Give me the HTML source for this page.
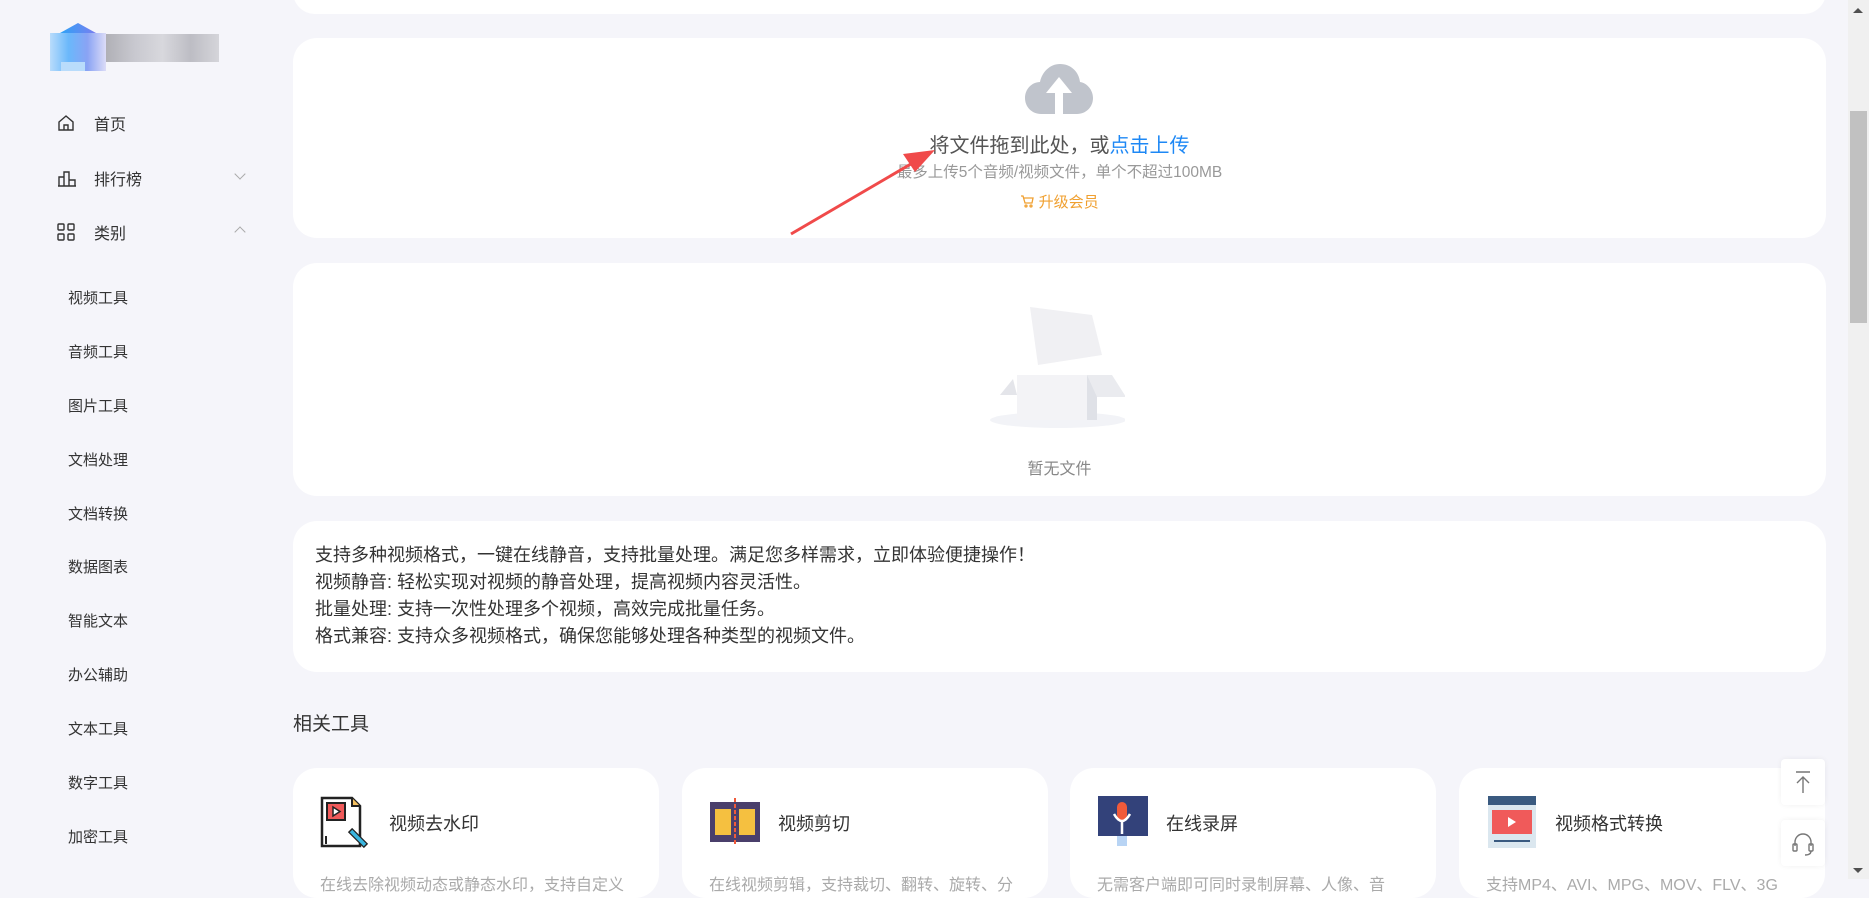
<!DOCTYPE html>
<html><head><meta charset="utf-8"><style>
*{margin:0;padding:0;box-sizing:border-box}
body{width:1869px;height:879px;overflow:hidden;background:#f5f5fa;font-family:"Liberation Sans","Noto Sans CJK SC",sans-serif;position:relative;color:#333}
.card{position:absolute;left:293px;width:1533px;background:#fff;border-radius:24px}
.side{position:absolute;left:0;top:0;width:277px;height:879px}
.mi{position:absolute;left:57px;font-size:16px;color:#333;display:flex;align-items:center}
.mi span{margin-left:19px}
.sub{position:absolute;left:68px;font-size:15px;color:#333}
.chev{position:absolute;left:236px;width:8px;height:8px;border-right:1.3px solid #aaa;border-bottom:1.3px solid #aaa}
.tool{position:absolute;top:768px;width:366px;height:130px;background:#fff;border-radius:24px}
.tool .ic{position:absolute;left:27px;top:28px;width:52px;height:52px}
.tool .t{position:absolute;left:96px;top:42px;font-size:18px;color:#333}
.tool .d{position:absolute;left:27px;top:103px;font-size:16px;color:#aaa;white-space:nowrap}
.fb{position:absolute;left:1781px;width:44px;height:46px;background:#fff;border-radius:4px;box-shadow:0 0 6px rgba(0,0,0,.06)}
</style></head><body>
<div class="side">
  <div style="position:absolute;left:50px;top:33px;width:56px;height:38px;background:linear-gradient(90deg,#b9dcfb,#6ab8fb,#8aa3f4,#dcdcf7)"></div>
  <div style="position:absolute;left:60px;top:23px;width:36px;height:10px;background:linear-gradient(90deg,#2ea3f6,#7a7ef0);clip-path:polygon(0 100%,50% 0,100% 100%)"></div>
  <div style="position:absolute;left:61px;top:62px;width:24px;height:9px;background:#b9dcfb"></div>
  <div style="position:absolute;left:106px;top:34px;width:113px;height:28px;background:linear-gradient(90deg,#b0b0b6,#c8c8cf,#d8d8dd,#bdbdc4,#d5d5da)"></div>
  <div class="mi" style="top:111px"><svg width="18" height="18" viewBox="0 0 18 18" fill="none" stroke="#333" stroke-width="1.4"><path d="M2 8L9 2l7 6v8H2z"/><path d="M7 16v-5h4v5"/></svg><span>首页</span></div>
  <div class="mi" style="top:166px"><svg width="20" height="18" viewBox="0 0 20 18" fill="none" stroke="#333" stroke-width="1.4"><path d="M1 17h18M2 17V8h5v9M7 17V3h5v14M12 17v-6h6v6"/></svg><span style="margin-left:17px">排行榜</span></div>
  <div class="chev" style="top:170px;transform:rotate(45deg)"></div>
  <div class="mi" style="top:220px"><svg width="18" height="18" viewBox="0 0 18 18" fill="none" stroke="#333" stroke-width="1.4"><rect x="1" y="1" width="6" height="6" rx="1"/><rect x="11" y="1" width="6" height="6" rx="1"/><rect x="1" y="11" width="6" height="6" rx="1"/><rect x="11" y="11" width="6" height="6" rx="1"/></svg><span>类别</span></div>
  <div class="chev" style="top:228px;transform:rotate(225deg)"></div>
  <div class="sub" style="top:287px">视频工具</div>
  <div class="sub" style="top:341px">音频工具</div>
  <div class="sub" style="top:395px">图片工具</div>
  <div class="sub" style="top:449px">文档处理</div>
  <div class="sub" style="top:503px">文档转换</div>
  <div class="sub" style="top:556px">数据图表</div>
  <div class="sub" style="top:610px">智能文本</div>
  <div class="sub" style="top:664px">办公辅助</div>
  <div class="sub" style="top:718px">文本工具</div>
  <div class="sub" style="top:772px">数字工具</div>
  <div class="sub" style="top:826px">加密工具</div>
</div>

<div class="card" style="top:-30px;height:44px"></div>
<div class="card" style="top:38px;height:200px">
  <svg style="position:absolute;left:732px;top:26px" width="68" height="50" viewBox="0 0 68 50"><path d="M16 50C7 50 0 43 0 34s7-16 15-16C17 8 25 0 35 0c11 0 19 8 20 18 7 1 13 8 13 16 0 9-7 16-16 16z" fill="#c0c4cc"/><path d="M34 13L21 29h9v21h8V29h9z" fill="#fff"/></svg>
  <div style="position:absolute;left:0;right:0;top:91px;text-align:center;font-size:20px;color:#555">将文件拖到此处，或<span style="color:#1e88f5">点击上传</span></div>
  <div style="position:absolute;left:0;right:0;top:122px;text-align:center;font-size:15.5px;color:#999">最多上传5个音频/视频文件，单个不超过100MB</div>
  <div style="position:absolute;left:0;right:0;top:153px;text-align:center;font-size:15px;color:#f0a030"><svg width="14" height="14" viewBox="0 0 14 14" fill="none" stroke="#f0a030" stroke-width="1.3" style="vertical-align:-1px"><path d="M1 2h2l2 7h7l1-5H4"/><circle cx="6" cy="12" r="1"/><circle cx="11" cy="12" r="1"/></svg> 升级会员</div>
</div>
<div class="card" style="top:263px;height:233px">
  <svg style="position:absolute;left:697px;top:32px" width="135" height="140" viewBox="0 0 135 140">
    <ellipse cx="68" cy="125" rx="68" ry="8" fill="#f2f3f7"/>
    <path d="M40 12L102 20 112 60 48 70z" fill="#f0f0f3"/>
    <path d="M23 84L10 100h17z" fill="#e4e5ea"/>
    <path d="M27 80h70v45H27z" fill="#f3f3f6"/>
    <path d="M97 80l10 0v45H97z" fill="#dfe1e7"/>
    <path d="M97 80h25l14 22H107z" fill="#eaebef"/>
  </svg>
  <div style="position:absolute;left:0;right:0;top:192px;text-align:center;font-size:16px;color:#888">暂无文件</div>
</div>
<div class="card" style="top:521px;height:151px;padding:21px 22px;font-size:18px;line-height:27px;color:#333">
支持多种视频格式，一键在线静音，支持批量处理。满足您多样需求，立即体验便捷操作！<br>视频静音: 轻松实现对视频的静音处理，提高视频内容灵活性。<br>批量处理: 支持一次性处理多个视频，高效完成批量任务。<br>格式兼容: 支持众多视频格式，确保您能够处理各种类型的视频文件。
</div>
<div style="position:absolute;left:293px;top:709px;font-size:19px;color:#333">相关工具</div>

<div class="tool" style="left:293px">
  <svg class="ic" viewBox="0 0 52 52"><path d="M2 2h30l8 8v40H2z" fill="#fff" stroke="#222" stroke-width="2.5"/><rect x="7" y="7" width="18" height="17" fill="#f05a5a" stroke="#222" stroke-width="2"/><path d="M13 11v9l7-4.5z" fill="#fff" stroke="#222" stroke-width="1.5"/><path d="M32 2v8h8" fill="#f5c060" stroke="#222" stroke-width="2"/><path d="M30 34l16 16" stroke="#222" stroke-width="6"/><path d="M31 35l14 14" stroke="#3ab6e0" stroke-width="3.5"/><path d="M6 40v8" stroke="#222" stroke-width="2"/></svg>
  <div class="t">视频去水印</div><div class="d">在线去除视频动态或静态水印，支持自定义</div>
</div>
<div class="tool" style="left:682px">
  <svg class="ic" viewBox="0 0 52 52"><rect x="1" y="6" width="50" height="40" fill="#4a3f6b"/><rect x="6" y="13" width="16" height="26" fill="#f5c040"/><rect x="30" y="13" width="16" height="26" fill="#f5c040"/><path d="M26 2v48" stroke="#f05a3a" stroke-width="2" stroke-dasharray="4 2"/></svg>
  <div class="t">视频剪切</div><div class="d">在线视频剪辑，支持裁切、翻转、旋转、分</div>
</div>
<div class="tool" style="left:1070px">
  <svg class="ic" viewBox="0 0 52 52"><rect x="1" y="0" width="50" height="40" fill="#33427a"/><rect x="20" y="6" width="10" height="18" rx="5" fill="#f05a3a"/><path d="M17 18q8 14 16 0M25 26v12" stroke="#fff" stroke-width="2.5" fill="none"/><rect x="20" y="40" width="10" height="10" fill="#b8d4f4"/></svg>
  <div class="t">在线录屏</div><div class="d">无需客户端即可同时录制屏幕、人像、音</div>
</div>
<div class="tool" style="left:1459px">
  <svg class="ic" viewBox="0 0 52 52"><rect x="2" y="0" width="48" height="52" fill="#dbe7ef"/><rect x="2" y="0" width="48" height="9" fill="#3a5a80"/><rect x="6" y="14" width="40" height="24" fill="#f05a5a"/><path d="M22 21v10l8-5z" fill="#fff"/><path d="M8 45h36" stroke="#3a5a80" stroke-width="2"/></svg>
  <div class="t">视频格式转换</div><div class="d">支持MP4、AVI、MPG、MOV、FLV、3G</div>
</div>

<div class="fb" style="top:759px"><svg width="44" height="46" viewBox="0 0 44 46" fill="none" stroke="#777" stroke-width="1.4"><path d="M15 13h14M22 34V18M16 24l6-6 6 6"/></svg></div>
<div class="fb" style="top:820px"><svg width="44" height="46" viewBox="0 0 44 46" fill="none" stroke="#777" stroke-width="1.4"><path d="M14 26v-4a8 8 0 0116 0v4"/><rect x="12" y="24" width="4" height="7" rx="1"/><rect x="28" y="24" width="4" height="7" rx="1"/><path d="M30 31q0 4-6 4"/></svg></div>

<div style="position:absolute;left:1848px;top:0;width:21px;height:879px;background:#f0f0f0"></div>
<div style="position:absolute;left:1853px;top:8px;width:0;height:0;border-left:5px solid transparent;border-right:5px solid transparent;border-bottom:5px solid #505050"></div>
<div style="position:absolute;left:1850px;top:111px;width:17px;height:212px;background:#c1c1c1"></div>
<div style="position:absolute;left:1853px;top:868px;border-left:5px solid transparent;border-right:5px solid transparent;border-top:5px solid #505050"></div>

<svg style="position:absolute;left:785px;top:140px" width="150" height="100" viewBox="0 0 150 100"><path d="M6 94L143 14" stroke="#f04a4a" stroke-width="3"/><path d="M150 10L118 14 130 32z" fill="#f04a4a"/></svg>
</body></html>
